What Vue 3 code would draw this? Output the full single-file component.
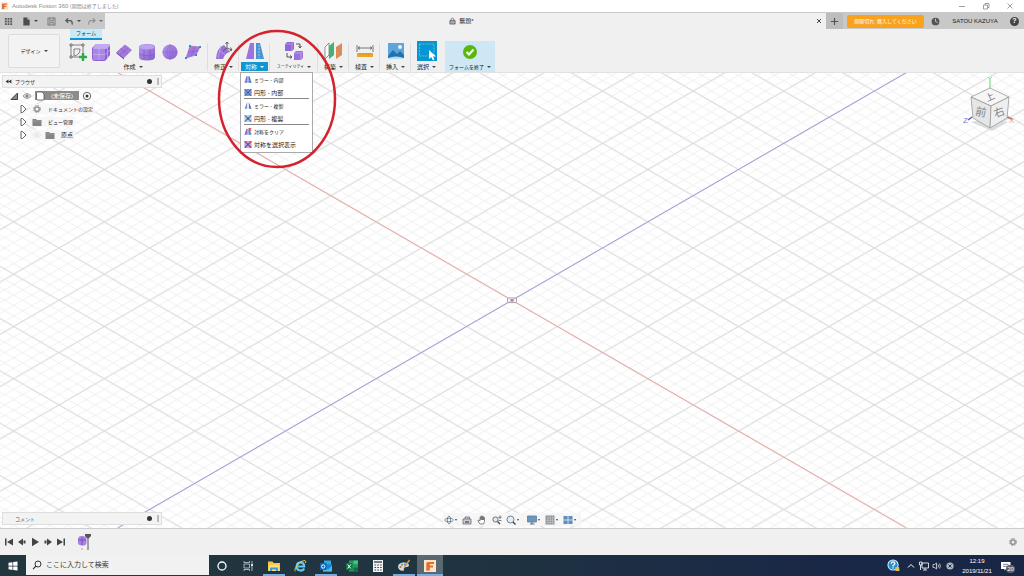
<script setup>
import { ref } from 'vue'

const createTools = [
  { id: 'i-sketch', label: 'スケッチを作成' },
  { id: 'i-box', label: '直方体' },
  { id: 'i-plane', label: '平面' },
  { id: 'i-cylinder', label: '円柱' },
  { id: 'i-sphere', label: '球' },
  { id: 'i-face', label: '面' }
]
const groupsBefore = [{ id: 'i-modify', label: '修正', cls: 'g-std' }]
const groupsAfter = [
  { id: 'i-utility', label: 'ユーティリティ', cls: 'g-util' },
  { id: 'i-construct', label: '構築', cls: 'g-std' },
  { id: 'i-inspect', label: '検査', cls: 'g-std' },
  { id: 'i-insert', label: '挿入', cls: 'g-std' },
  { id: 'i-select', label: '選択', cls: 'g-std g-last' }
]
const menu = [
  { id: 'm-mirror', label: 'ミラー - 内部', kana: true },
  { id: 'm-circ', label: '円形 - 内部', line: true },
  { id: 'm-mirror2', label: 'ミラー - 複製', kana: true },
  { id: 'm-circ2', label: '円形 - 複製', line: true },
  { id: 'm-clear', label: '対称をクリア', kana: true },
  { id: 'm-show', label: '対称を選択表示' }
]
const nav = [
  { id: 'n-orbit', drop: true, label: 'オービット' },
  { id: 'n-look', label: 'ビュー正面' },
  { id: 'n-pan', label: '画面移動' },
  { id: 'n-zoom', label: 'ズーム' },
  { id: 'n-fit', drop: true, label: 'フィット', gap: true },
  { id: 'n-display', drop: true, label: '表示設定' },
  { id: 'n-grid', drop: true, label: 'グリッド' },
  { id: 'n-views', drop: true, label: 'ビューポート' }
]
const play = [
  { id: 'p-first', label: '先頭' },
  { id: 'p-prev', label: '前へ' },
  { id: 'p-play', label: '再生' },
  { id: 'p-next', label: '次へ' },
  { id: 'p-last', label: '末尾' }
]
const apps = [
  { id: 't-cortana', label: 'Cortana' },
  { id: 't-view', label: 'タスクビュー' },
  { id: 't-folder', label: 'エクスプローラー', open: true },
  { id: 't-ie', label: 'Internet Explorer' },
  { id: 't-outlook', label: 'Outlook', open: true },
  { id: 't-excel', label: 'Excel' },
  { id: 't-calc', label: '電卓' },
  { id: 't-paint', label: 'ペイント', open: true },
  { id: 't-fusion', label: 'Fusion 360', open: true, active: true }
]
const query = ref('')
</script>

<template>
  <div class="app">
    <svg class="sheet" aria-hidden="true">
      <defs>
        <linearGradient id="violet" x1="0" y1="0" x2="1" y2="1">
          <stop offset="0" stop-color="#b497ea" /><stop offset="1" stop-color="#8a5fd0" />
        </linearGradient>
        <symbol id="i-sketch" viewBox="0 0 20 20">
          <path d="M3 3H15V15H3Z" fill="none" stroke="#666" stroke-width=".8" />
          <path d="M6 14V7H12V8Q11.500 13 6 14Z" fill="none" stroke="#666" stroke-width=".8" />
          <path d="M2 2h2v2H2zM14 2h2v2h-2zM2 14h2v2H2z" fill="#fff" stroke="#555" stroke-width=".8" />
          <path d="M15 11v8M11 15h8" stroke="#2da84a" stroke-width="2.400" />
        </symbol>
        <symbol id="i-box" viewBox="0 0 20 20">
          <path d="M5 2H17Q19 2 19 4V13L15 18Q14.500 19 13 19H4Q1 19 1 16V6Z" fill="#8d62d3" />
          <path d="M5 2H17Q19 2 19 4L15 7H2Q2 4 5 2Z" fill="#c3aaf0" />
          <path d="M2 8Q2 7 3 7H13Q14 7 14 8V17Q14 18 13 18H3Q2 18 2 17Z" fill="#aa87e4" />
          <path d="M8 7V18M2 12.500H14L19 8M8 7L12 2M16.500 5V16" stroke="#c9b3f2" stroke-width=".7" fill="none" />
        </symbol>
        <symbol id="i-plane" viewBox="0 0 20 20">
          <path d="M11 2.500L18 8L10 16L2.500 10Z" fill="#a178dc" />
          <path d="M2.500 10L10 16L10 17.500L2.500 11.500Z" fill="#6e48ae" />
          <path d="M14.500 5.500L6 13M6.500 6.500L14 12" stroke="#875dc9" stroke-width=".7" />
        </symbol>
        <symbol id="i-cylinder" viewBox="0 0 20 20">
          <path d="M2 5Q2 2 10 2T18 5V15Q18 18.500 10 18.500T2 15Z" fill="url(#violet)" />
          <ellipse cx="10" cy="5" rx="7.500" ry="2.600" fill="#bda2ee" />
          <path d="M7 7.500V18M13 7.500V18M2 12Q10 15.500 18 12" fill="none" stroke="#8054c5" stroke-width=".6" />
        </symbol>
        <symbol id="i-sphere" viewBox="0 0 20 20">
          <circle cx="10" cy="10" r="7.600" fill="url(#violet)" />
          <path d="M10 2.500V17.500M2.500 10H17.500M10 2.500Q4 10 10 17.500M10 2.500Q16 10 10 17.500" fill="none" stroke="#8b62cd" stroke-width=".5" />
        </symbol>
        <symbol id="i-face" viewBox="0 0 20 20">
          <path d="M7 4L17 5L13 13L3 16Z" fill="#a178dc" stroke="#9370cf" stroke-width=".6" />
          <path d="M12 4.500L8 14.500M5 10L15 9" stroke="#8357c7" stroke-width=".6" />
          <path d="M6 3h2v2H6zM16 4h2v2h-2zM12 12h2v2h-2zM2 15h2v2H2z" fill="#3a86d6" />
        </symbol>
        <symbol id="i-modify" viewBox="0 0 20 20">
          <path d="M2 18Q3 6 10 4L16 11Q11 12 9 18Z" fill="#9a70da" />
          <path d="M5 9L11 14M7 5L4 17" stroke="#c3aaee" stroke-width=".7" />
          <path d="M13 7V1M13 7L18 9M13 7L9 10M11.500 3L13 1L14.500 3M16.500 6.500L18 9L15.500 10" fill="none" stroke="#555" stroke-width=".9" />
        </symbol>
        <symbol id="i-sym" viewBox="0 0 20 20">
          <path d="M5 2H9V18H1Z" fill="#9c74db" /><path d="M11 2H15L19 18H11Z" fill="#4b93cf" />
          <path d="M10 1V19" stroke="#e3edf6" stroke-width="1.200" />
          <path d="M14 4V17" stroke="#9cd0ee" stroke-width="1" stroke-dasharray="2 1" />
        </symbol>
        <symbol id="i-utility" viewBox="0 0 20 20">
          <path d="M1 3L3 1H10V8L8 10H1Z" fill="#9268d4" /><path d="M1 3H8V10M8 3L10 1" fill="none" stroke="#c2a9ef" stroke-width=".7" />
          <path d="M10 12L12 10H19V17L17 19H10Z" fill="#9a72da" /><path d="M10 12H17V19M17 12L19 10" fill="none" stroke="#c9b5f2" stroke-width=".7" />
          <path d="M12 3H16V6M14.500 5L16 7L17.500 5M3 12V16H7M6 14.500L8 16L6 17.500" fill="none" stroke="#444" stroke-width=".9" />
        </symbol>
        <symbol id="i-construct" viewBox="0 0 20 20">
          <path d="M1 6L5 2V14L1 18Z" fill="#fff" stroke="#777" stroke-width=".8" />
          <path d="M5 5L10 1V14L5 18Z" fill="#3fb274" /><path d="M12 6L18 2V14L12 18Z" fill="#dd8b56" />
        </symbol>
        <symbol id="i-inspect" viewBox="0 0 20 20">
          <path d="M2 4V11M18 4V11M3 7H17M5 5.500L3 7L5 8.500M15 5.500L17 7L15 8.500" fill="none" stroke="#666" stroke-width=".9" />
          <path d="M2 12H18V16H2Z" fill="#eba52c" /><path d="M5 12v2M8 12v2M11 12v2M14 12v2" stroke="#c28523" stroke-width=".7" />
        </symbol>
        <symbol id="i-insert" viewBox="0 0 20 20">
          <path d="M2 2H18V18H2Z" fill="#5ca6dc" /><path d="M2 15L7 9L11 13L14 10L18 14V18H2Z" fill="#2472ad" />
          <circle cx="14" cy="6" r="2" fill="#e4f3fd" /><path d="M2 17Q10 14 18 17V18H2Z" fill="#b8ddf3" />
        </symbol>
        <symbol id="i-select" viewBox="0 0 20 20">
          <path d="M0 0H20V20H0Z" fill="#0696d7" />
          <path d="M2.500 3H17V15H2.500Z" fill="none" stroke="#7fcb8f" stroke-width=".8" stroke-dasharray="2 1" />
          <path d="M12 9V18L14.200 16L16 19.500L17.500 18.500L16 15.500H19Z" fill="#fff" />
        </symbol>
        <symbol id="i-finish" viewBox="0 0 20 20">
          <circle cx="10" cy="11" r="7" fill="#58b90c" /><path d="M6.500 11L9 13.500L13.500 8.500" fill="none" stroke="#fff" stroke-width="2" />
        </symbol>
        <symbol id="m-mirror" viewBox="0 0 10 10">
          <path d="M3 1H4.500V9H.5Z" fill="#9268d4" /><path d="M5.500 1H7L9.500 9H5.500Z" fill="#3585c5" /><path d="M1 6H9" stroke="#c8b5ee" stroke-width=".6" />
        </symbol>
        <symbol id="m-mirror2" viewBox="0 0 10 10">
          <path d="M3.800 1V9H.8Z" fill="#7b8dce" /><path d="M6.200 1V9H9.500Z" fill="#3585c5" /><path d="M5 1V9" stroke="#aaa" stroke-width=".5" />
        </symbol>
        <symbol id="m-circ" viewBox="0 0 10 10">
          <path d="M.5 .5H9.500V9.500H.5Z" fill="#8aa8d7" /><path d="M1 1L9 9M9 1L1 9" stroke="#3167a7" stroke-width="1.300" /><path d="M4 .5H6L5 3ZM4 9.500H6L5 7ZM.5 4V6L3 5ZM9.500 4V6L7 5Z" fill="#8a62c9" />
        </symbol>
        <symbol id="m-circ2" viewBox="0 0 10 10">
          <path d="M.5 .5H9.500V9.500H.5Z" fill="#bccde3" /><path d="M1 1L9 9M9 1L1 9" stroke="#4a80b5" stroke-width="1.500" /><circle cx="5" cy="5" r="1.500" fill="#396a9e" />
        </symbol>
        <symbol id="m-clear" viewBox="0 0 10 10">
          <path d="M3 1.500H4.500V9H.5Z" fill="#9268d4" /><path d="M5.500 1.500H7L9.500 9H5.500Z" fill="#4d8fca" /><path d="M6 .8L9 3.800M9 .8L6 3.800" stroke="#e04343" stroke-width="1.400" />
        </symbol>
        <symbol id="m-show" viewBox="0 0 10 10">
          <path d="M.5 .5H9.500V9.500H.5Z" fill="#b8a6d8" /><path d="M1 1L9 9M9 1L1 9" stroke="#6e48ae" stroke-width="1.500" /><path d="M1 1h2v2H1zM7 7h2v2H7zM7 1h2v2H7z" fill="#d94a5f" />
        </symbol>
        <symbol id="gear" viewBox="0 0 12 12">
          <circle cx="6" cy="6" r="4.100" fill="none" stroke="#888" stroke-width="1.200" stroke-dasharray="1.900 1.320" /><circle cx="6" cy="6" r="2.700" fill="none" stroke="#888" stroke-width="1.500" />
        </symbol>
        <symbol id="folder" viewBox="0 0 10 10"><path d="M.5 2H4L5 3H9.500V9H.5Z" fill="#858585" /><path d="M.5 4H9.500" stroke="#aaa" stroke-width=".6" /></symbol>
        <symbol id="eye" viewBox="0 0 10 10"><path d="M.8 5Q5 0 9.200 5Q5 10 .8 5Z" fill="#ddd" stroke="#999" stroke-width=".9" /><circle cx="5" cy="5" r="1.600" fill="#888" /></symbol>
        <symbol id="expand" viewBox="0 0 10 10"><path d="M3 1.500H4.500L8 5L4.500 8.500H3Z" fill="#fff" stroke="#555" stroke-width=".9" /></symbol>
        <symbol id="n-orbit" viewBox="0 0 10 10"><ellipse cx="5" cy="5" rx="4.300" ry="1.800" fill="none" stroke="#678" stroke-width=".8" /><ellipse cx="5" cy="5" rx="1.600" ry="4" fill="none" stroke="#678" stroke-width=".8" /></symbol>
        <symbol id="n-look" viewBox="0 0 10 10"><path d="M1 4H9V9H1ZM3 4V2H7.500V4" fill="#ccc" stroke="#778" stroke-width=".9" /><path d="M3 6h4v2H3z" fill="#778" /></symbol>
        <symbol id="n-pan" viewBox="0 0 10 10"><path d="M3 9L.8 5.500L2 5L3 6V2.200H4V5V1H5.200V5V1.500H6.300V5V2.500H7.500V6.500L6.500 9Z" fill="#fff" stroke="#555" stroke-width=".7" /></symbol>
        <symbol id="n-zoom" viewBox="0 0 10 10"><circle cx="3.500" cy="4.500" r="2.600" fill="#dfe9ef" stroke="#678" /><path d="M5.500 6.500L8 9" stroke="#444" stroke-width="1.300" /><path d="M8 .5V4M6.300 2.200H9.700M6.500 5.500h3" stroke="#555" stroke-width=".7" /></symbol>
        <symbol id="n-fit" viewBox="0 0 10 10"><circle cx="4.500" cy="4.500" r="3.500" fill="#e4edf2" stroke="#678" stroke-width=".9" /><path d="M7 7L9.500 9.500" stroke="#444" stroke-width="1.400" /></symbol>
        <symbol id="n-display" viewBox="0 0 10 10"><path d="M.5 1H9.500V7H.5Z" fill="#6a96c2" stroke="#667b90" stroke-width=".8" /><path d="M3 9H7.500M5 7V9" stroke="#667" /></symbol>
        <symbol id="n-grid" viewBox="0 0 10 10"><path d="M.5 .5H9.500V9.500H.5Z" fill="#8e9396" /><path d="M.5 3H9.500M.5 5.300H9.500M.5 7.600H9.500M3 .5V9.500M5.300 .5V9.500M7.600 .5V9.500" stroke="#d0d4d6" stroke-width=".5" /></symbol>
        <symbol id="n-views" viewBox="0 0 10 10"><path d="M.5 1H9.500V9H.5Z" fill="#5f8dbc" /><path d="M5 1V9M.5 5H9.500" stroke="#e8f0f8" stroke-width=".8" /></symbol>
        <symbol id="p-first" viewBox="0 0 10 10"><path d="M1 1.500H2.500V8.500H1ZM9 1.500V8.500L3 5Z" fill="#444" /></symbol>
        <symbol id="p-prev" viewBox="0 0 10 10"><path d="M6 1.500V8.500L1 5ZM6.500 3.500H8.500V6.500H6.500Z" fill="#444" /></symbol>
        <symbol id="p-play" viewBox="0 0 10 10"><path d="M2 .8L9 5L2 9.200Z" fill="#444" /></symbol>
        <symbol id="p-next" viewBox="0 0 10 10"><path d="M4 1.500V8.500L9 5ZM1.500 3.500H3.500V6.500H1.500Z" fill="#444" /></symbol>
        <symbol id="p-last" viewBox="0 0 10 10"><path d="M9 1.500H7.500V8.500H9ZM1 1.500V8.500L7 5Z" fill="#444" /></symbol>
        <symbol id="t-cortana" viewBox="0 0 14 14"><circle cx="7" cy="7" r="4" fill="none" stroke="#fff" stroke-width="1.300" /></symbol>
        <symbol id="t-view" viewBox="0 0 14 14"><path d="M3 5H8.500V9H3ZM3 2V3.500H8.500V2M3 12V10.500H8.500V12M11 2V12" fill="none" stroke="#c5cfd3" stroke-width=".8" /><path d="M10 5h2v2h-2z" fill="#ddd" /></symbol>
        <symbol id="t-folder" viewBox="0 0 14 14"><path d="M1 2.500H5.500L6.500 4H13V12H1Z" fill="#f5c74c" /><path d="M2 6H12V12H2Z" fill="#ffdf81" /><path d="M3 12V8.500H11V12H9V10.500H5V12Z" fill="#3b9bd5" /></symbol>
        <symbol id="t-ie" viewBox="0 0 14 14"><path d="M11.200 9.500Q10 12 7.200 11.500Q3.500 11 3.700 7.200Q4 3.500 7.500 3.300Q11 3.500 11.200 7.500H5" fill="none" stroke="#62c8f3" stroke-width="2.200" /><path d="M2.500 12Q.5 12 4 6.500Q8 1 12 1.500Q13.500 2 12.300 4" fill="none" stroke="#f3cf4b" stroke-width="1" /></symbol>
        <symbol id="t-outlook" viewBox="0 0 14 14"><path d="M5 1.500H12V7H5Z" fill="#35a6e6" /><path d="M4 6L13 5V12.500H4Z" fill="#1783d1" /><path d="M4 7L9 10.500L13 7V12.500H4Z" fill="#50b9ed" /><path d="M1 4H7.500V11H1Z" fill="#0b63b5" /><circle cx="4.200" cy="7.500" r="1.700" fill="none" stroke="#fff" stroke-width="1" /></symbol>
        <symbol id="t-excel" viewBox="0 0 14 14"><path d="M4 1.500H13V12.500H4Z" fill="#249a5c" /><path d="M8.500 1.500H13V5H8.500Z" fill="#3bc584" /><path d="M8.500 8.500H13V12.500H8.500Z" fill="#136c3e" /><path d="M1 4H7.500V11H1Z" fill="#107743" /><path d="M2.700 5.500L5.800 9.500M5.800 5.500L2.700 9.500" stroke="#fff" stroke-width="1" /></symbol>
        <symbol id="t-calc" viewBox="0 0 14 14"><path d="M2 1H12V13H2Z" fill="#f2f2f2" /><path d="M3 3H11" stroke="#344b54" stroke-width="1.400" /><path d="M3.500 6H10.800M3.500 8.500H10.800M3.500 11H10.800" stroke="#344b54" stroke-width="1.200" stroke-dasharray="1.600 1.200" /></symbol>
        <symbol id="t-paint" viewBox="0 0 14 14"><path d="M1 8Q1 4 6 3.500T12 6Q12 8 9 8T7 11.500Q2 12.500 1 8Z" fill="#d5dde1" /><circle cx="3.500" cy="8" r="1" fill="#d75543" /><circle cx="5" cy="5.700" r="1" fill="#4c9c58" /><circle cx="8" cy="5.500" r="1" fill="#3878bd" /><path d="M12.500 1L7 9" stroke="#d59b4f" stroke-width="1.400" /></symbol>
        <symbol id="t-fusion" viewBox="0 0 14 14"><path d="M1 1H13V13H1Z" fill="#fbe4cf" /><path d="M4.500 3H11V5H6.800V6.500H10V8.500H6.800V11.500H4.500Z" fill="#ec6c1c" /><path d="M4.500 3L3.500 4V12L4.500 11.500Z" fill="#a84710" /></symbol>
      </defs>
    </svg>

    <header class="titlebar">
      <svg class="logo" viewBox="0 0 14 14"><use href="#t-fusion" /></svg>
      <span class="title">Autodesk Fusion 360 <small>(期間は終了しました)</small></span>
      <div class="wincontrols">
        <button aria-label="最小化"><svg viewBox="0 0 8 8"><path d="M1 4.500H7" /></svg></button>
        <button aria-label="元に戻す"><svg viewBox="0 0 8 8"><path d="M1.500 3H5.500V7H1.500ZM3 3V1.500H7V5.500H5.500" /></svg></button>
        <button aria-label="閉じる"><svg viewBox="0 0 8 8"><path d="M1.500 1.500L6.500 6.500M6.500 1.500L1.500 6.500" /></svg></button>
      </div>
    </header>

    <div class="tabbar">
      <div class="quick">
        <button aria-label="データパネル"><svg viewBox="0 0 10 10"><path d="M1 1h2v2H1zM4 1h2v2H4zM7 1h2v2H7zM1 4h2v2H1zM4 4h2v2H4zM7 4h2v2H7zM1 7h2v2H1zM4 7h2v2H4zM7 7h2v2H7z" fill="#555" /></svg></button>
        <button aria-label="ファイル" class="q-drop"><svg viewBox="0 0 10 10"><path d="M1.500 .5H6L8.500 3V9.500H1.500Z" fill="#4c4c4c" /><path d="M6 .5V3H8.500" fill="#bbb" /></svg><i></i></button>
        <button aria-label="保存"><svg viewBox="0 0 10 10"><path d="M1 1H9V9H1Z" fill="#b9b9b9" stroke="#777" stroke-width=".9" /><path d="M3 1V4H7V1M3 9V6H7V9" fill="none" stroke="#777" stroke-width=".8" /></svg></button>
        <button aria-label="元に戻す" class="q-drop"><svg viewBox="0 0 10 10"><path d="M3.500 1.500L1 4L3.500 6.500M1 4H6Q8.500 4.500 8 8.500" fill="none" stroke="#555" stroke-width="1.400" /></svg><i></i></button>
        <button aria-label="やり直し" class="q-drop faded"><svg viewBox="0 0 10 10"><path d="M6.500 1.500L9 4L6.500 6.500M9 4H4Q1.500 4.500 2 8.500" fill="none" stroke="#777" stroke-width="1.200" /></svg><i></i></button>
      </div>
      <div class="doc">
        <svg class="lock" viewBox="0 0 8 8"><path d="M1 3.500H7V7.500H1Z" fill="#aaa" stroke="#555" stroke-width=".8" /><path d="M2.300 3.500V2Q4 -.5 5.700 2V3.500" fill="none" stroke="#555" stroke-width=".9" /></svg>
        <span>無題*</span>
        <button class="doc-close" aria-label="タブを閉じる"><svg viewBox="0 0 8 8"><path d="M2 2L6 6M6 2L2 6" stroke="#444" stroke-width="1" /></svg></button>
      </div>
      <div class="account">
        <button class="plus" aria-label="新規"><svg viewBox="0 0 10 10"><path d="M5 1V9M1 5H9" stroke="#555" stroke-width="1.300" /></svg></button>
        <button class="buy">期限切れ: 購入してください</button>
        <svg class="clockico" viewBox="0 0 10 10"><circle cx="5" cy="5" r="4.300" fill="#555" /><path d="M5 2V5L7.500 6" stroke="#ccc" fill="none" /></svg>
        <span class="user">SATOU KAZUYA</span>
        <button class="help" aria-label="ヘルプ">?</button>
      </div>
    </div>

    <section class="ribbon">
      <button class="workspace"><span class="kana">デザイン</span><i></i></button>
      <div class="g create">
        <a class="tab kana" href="#form">フォーム</a>
        <div class="tools">
          <button v-for="t in createTools" :key="t.id" :aria-label="t.label"><svg viewBox="0 0 20 20"><use :href="'#' + t.id" /></svg></button>
        </div>
        <button class="lbl">作成<i></i></button>
      </div>
      <div v-for="g in groupsBefore" :key="g.id" class="g" :class="g.cls">
        <svg class="big" viewBox="0 0 20 20"><use :href="'#' + g.id" /></svg>
        <button class="lbl">{{ g.label }}<i></i></button>
      </div>
      <div class="g g-std sym">
        <svg class="big" viewBox="0 0 20 20"><use href="#i-sym" /></svg>
        <button class="lbl on">対称<i></i></button>
        <ul class="menu">
          <li v-for="m in menu" :key="m.id" :class="{ line: m.line, kana: m.kana }">
            <button><svg viewBox="0 0 10 10"><use :href="'#' + m.id" /></svg>{{ m.label }}</button>
          </li>
        </ul>
        <svg class="ring" viewBox="0 0 120 140"><ellipse cx="60" cy="70" rx="58" ry="68" /></svg>
      </div>
      <div v-for="g in groupsAfter" :key="g.id" class="g" :class="g.cls">
        <svg class="big" viewBox="0 0 20 20"><use :href="'#' + g.id" /></svg>
        <button class="lbl">{{ g.label }}<i></i></button>
      </div>
      <div class="g finish">
        <svg class="big" viewBox="0 0 20 20"><use href="#i-finish" /></svg>
        <button class="lbl kana">フォームを終了<i></i></button>
      </div>
    </section>

    <main class="canvas">
      <svg class="grid" viewBox="0 0 1024 455" preserveAspectRatio="xMidYMid slice">
        <defs>
          <pattern id="minor" x="512" y="227.300" width="18.120" height="10.460" patternUnits="userSpaceOnUse">
            <path d="M0 0L18.120 10.460M18.120 0L0 10.460" stroke="#e9e9e9" stroke-width=".7" />
          </pattern>
          <pattern id="major" x="512" y="227.300" width="90.600" height="52.300" patternUnits="userSpaceOnUse">
            <path d="M0 0L90.600 52.300M90.600 0L0 52.300" stroke="#d9d9d9" stroke-width="1" />
          </pattern>
        </defs>
        <rect width="1024" height="455" fill="url(#minor)" />
        <rect width="1024" height="455" fill="url(#major)" />
        <path d="M118 -.200L906 454.700" stroke="#eda6a2" stroke-width="1" />
        <path d="M118 454.700L906 -.200" stroke="#9d9de0" stroke-width="1" />
        <rect x="507.500" y="225" width="9" height="4.600" rx="1" fill="#fff" fill-opacity=".5" stroke="#a8989f" stroke-width=".9" />
        <circle cx="512" cy="227.300" r="1.500" fill="#9d8aa8" />
      </svg>

      <aside class="browser">
        <div class="panel">
          <svg class="rew" viewBox="0 0 8 6"><path d="M4 .5V5.500L.5 3ZM7.500 .5V5.500L4 3Z" fill="#333" /></svg>
          <span class="kana">ブラウザ</span><b></b><em></em>
        </div>
        <ul class="tree">
          <li class="root">
            <svg viewBox="0 0 10 10"><path d="M8.500 2V8.500H2Z" fill="#888" stroke="#333" stroke-width=".9" /></svg>
            <svg viewBox="0 0 10 10"><use href="#eye" /></svg>
            <span class="chip"><svg viewBox="0 0 10 10"><path d="M1.500 2Q1.500 1 2.500 1H7L9 3V8Q9 9 8 9H2.500Q1.500 9 1.500 8Z" fill="#fff" stroke="#555" stroke-width=".8" /></svg><strong>(未保存)</strong></span>
            <svg viewBox="0 0 10 10"><circle cx="5" cy="5" r="3.700" fill="#fff" stroke="#555" stroke-width=".9" /><circle cx="5" cy="5" r="1.500" fill="#333" /></svg>
          </li>
          <li><svg viewBox="0 0 10 10"><use href="#expand" /></svg><span class="node"><svg viewBox="0 0 12 12"><use href="#gear" /></svg><span class="kana">ドキュメントの設定</span></span></li>
          <li><svg viewBox="0 0 10 10"><use href="#expand" /></svg><span class="node"><svg viewBox="0 0 10 10"><use href="#folder" /></svg><span class="kana">ビュー管理</span></span></li>
          <li><svg viewBox="0 0 10 10"><use href="#expand" /></svg><span class="node"><svg class="ghost" viewBox="0 0 10 10"><use href="#eye" /></svg><svg viewBox="0 0 10 10"><use href="#folder" /></svg><span>原点</span></span></li>
        </ul>
      </aside>

      <svg class="cube" viewBox="0 0 56 62">
        <path d="M28 5V16" stroke="#7fdc86" stroke-width="1.200" /><path d="M26 4L28 6L30 4" fill="none" stroke="#8fe396" />
        <path d="M10 44L6 47" stroke="#5b5bb8" stroke-width="1.500" /><path d="M45 44L50 46" stroke="#c76464" stroke-width="1.500" />
        <path d="M9 49Q28 43 46 49L30 58Z" fill="#dcdcdc" />
        <path d="M28 15L47 24L29 33L9 24Z" fill="#f6f6f6" stroke="#999" stroke-width=".8" />
        <path d="M9 24L29 33L28 55L11 45Z" fill="#e5e6e7" stroke="#999" stroke-width=".8" />
        <path d="M47 24L29 33L28 55L45 45Z" fill="#eeeff0" stroke="#999" stroke-width=".8" />
        <text x="28" y="27" font-size="9" fill="#777" text-anchor="middle" transform="rotate(-25 28 24)">上</text>
        <text x="19" y="43" font-size="11" fill="#888" text-anchor="middle" transform="rotate(12 19 39)">前</text>
        <text x="37" y="43" font-size="11" fill="#888" text-anchor="middle" transform="rotate(-20 37 39)">右</text>
        <text x="1" y="50" font-size="8" fill="#7d7de0">Z</text>
        <text x="47" y="50" font-size="8" fill="#ee8a86">X</text>
      </svg>

      <div class="panel comment"><span class="kana">コメント</span><b></b><em></em></div>

      <nav class="navbar">
        <button v-for="n in nav" :key="n.id" :aria-label="n.label" :class="{ gap: n.gap }"><svg viewBox="0 0 10 10"><use :href="'#' + n.id" /></svg><i v-if="n.drop"></i></button>
      </nav>
    </main>

    <section class="timeline">
      <button v-for="p in play" :key="p.id" :aria-label="p.label"><svg viewBox="0 0 10 10"><use :href="'#' + p.id" /></svg></button>
      <svg class="feature" viewBox="0 0 16 20">
        <path d="M1 7Q1 4 5 4T9.500 6V11Q9 14 5 13.500T1 11Z" fill="#a583de" /><path d="M1 8H9M5 5V13" stroke="#7443b9" stroke-width=".8" />
        <path d="M8 2H14V4L11.500 6.500V18H10.500V6.500L8 4Z" fill="#555" /><path d="M5 16V18" stroke="#b19ae0" />
      </svg>
      <button class="settings" aria-label="設定"><svg viewBox="0 0 12 12"><use href="#gear" /></svg></button>
    </section>

    <footer class="taskbar">
      <button class="start" aria-label="スタート"><svg viewBox="0 0 10 10"><path d="M.5 1.800L4.500 1.200V4.700H.5ZM5.200 1.100L9.500 .5V4.700H5.200ZM.5 5.400H4.500V8.900L.5 8.300ZM5.200 5.400H9.500V9.600L5.200 9Z" fill="#fff" /></svg></button>
      <label class="search">
        <svg viewBox="0 0 10 10"><circle cx="6" cy="4" r="3" fill="none" stroke="#333" stroke-width="1" /><path d="M4 6L1 9.200" stroke="#333" stroke-width="1.100" /></svg>
        <input v-model="query" type="text" placeholder="ここに入力して検索" aria-label="検索" />
      </label>
      <button v-for="a in apps" :key="a.id" class="appbtn" :class="{ open: a.open, active: a.active }" :aria-label="a.label"><svg viewBox="0 0 14 14"><use :href="'#' + a.id" /></svg></button>
      <div class="tray">
        <svg class="helpico" viewBox="0 0 14 14"><circle cx="6.500" cy="6.500" r="6" fill="#e4f4fc" /><circle cx="6.500" cy="6.500" r="5" fill="#278fcb" /><path d="M4.500 5Q4.700 3 6.500 3T8.500 5Q8.300 6.300 6.500 7V8M6.500 9V10.300" fill="none" stroke="#fff" stroke-width="1.300" /><path d="M9 9L13 8.500L13.500 13H9Z" fill="#e5c14d" /></svg>
        <svg viewBox="0 0 10 10"><path d="M2 6.500L5 3.500L8 6.500" fill="none" stroke="#fff" /></svg>
        <svg viewBox="0 0 10 10"><path d="M3 2H9.500V7H3ZM6 7V9M4 9H8M.5 1H3V4H.5ZM1.500 4V9" fill="none" stroke="#fff" stroke-width=".8" /></svg>
        <svg viewBox="0 0 10 10"><path d="M1 3.500H2.500L4.500 2V8L2.500 6.500H1ZM6 3.500Q7 5 6 6.500M7.500 2.500Q9.200 5 7.500 7.500" fill="none" stroke="#ddd" stroke-width=".8" /></svg>
        <svg viewBox="0 0 10 10"><circle cx="5" cy="5" r="3.600" fill="#aeb5bd" /><path d="M3.500 3.500L6.500 6.500M6.500 3.500L3.500 6.500" stroke="#24314d" stroke-width="1" /></svg>
        <time>12:19<br />2019/11/21</time>
        <span class="notice"><svg viewBox="0 0 10 10"><path d="M0 1H9.500V8H5L3.500 9.800V8H0Z" fill="#fff" /><path d="M2 3.300H7.500M2 5.300H7.500" stroke="#47526c" stroke-width=".7" /></svg><b>20</b></span>
      </div>
    </footer>
  </div>
</template>

<style>
html, body { margin: 0; background: #fff; }
</style>

<style scoped>
.app { display: flex; flex-direction: column; min-height: 100vh; overflow: hidden; font: 6px/8px "Liberation Sans", "Noto Sans CJK JP", sans-serif; color: #222; }
.app * { box-sizing: border-box; }
.sheet { position: absolute; width: 0; height: 0; }
button { border: 0; padding: 0; margin: 0; background: none; font: inherit; color: inherit; display: flex; align-items: center; justify-content: center; white-space: nowrap; }
svg { display: block; flex: none; }
ul { list-style: none; margin: 0; padding: 0; }
i { flex: none; width: 0; height: 0; border: 2px solid transparent; border-top: 2px solid #444; border-bottom: 0; margin-left: 3px; }
.kana { font-size: 5px; }

.titlebar { display: flex; align-items: center; height: 13px; background: #fff; border-bottom: 1px solid #c8c8c8; color: #8c8c8c; }
.logo { width: 9px; height: 10px; margin: 0 3px 0 0; }
.title small { font-size: 5px; }
.wincontrols { margin-left: auto; display: flex; gap: 16px; padding-right: 10px; }
.wincontrols svg { width: 8px; height: 8px; fill: none; stroke: #888; stroke-width: .8; }

.tabbar { display: flex; height: 16px; background: #f0f0f0; }
.quick { width: 105px; display: flex; align-items: center; gap: 9px; padding-left: 4px; background: #c8c8c8; }
.quick svg { width: 9px; height: 9px; }
.quick .faded { margin-left: -3px; opacity: .7; }
.doc { flex: 1; display: flex; align-items: center; justify-content: center; gap: 3px; padding-left: 6px; }
.lock { width: 7px; height: 8px; margin-left: auto; }
.doc-close { margin-left: auto; padding-right: 3px; }
.doc-close svg { width: 8px; height: 8px; }
.account { width: 198px; display: flex; align-items: center; background: #c8c8c8; }
.plus { width: 17px; height: 16px; background: #bdbdbd; }
.plus svg { width: 9px; height: 9px; }
.buy { width: 77px; height: 13px; margin-left: 4px; border-radius: 2px; background: #faa21b; color: #fff; font-size: 5px; }
.clockico { width: 9px; height: 9px; margin-left: 7px; }
.user { margin: 0 auto; }
.help { width: 9px; height: 9px; margin-right: 5px; border-radius: 50%; background: #444; color: #fff; font-size: 7px; font-weight: bold; }

.ribbon { display: flex; height: 44px; background: #f0f0f0; border-bottom: 1px solid #e2e2e2; }
.workspace { width: 52px; height: 34px; margin: 5px 6px 0 8px; border: 1px solid #dcdcdc; border-radius: 2px; background: #f3f3f3; }
.g { position: relative; display: flex; flex-direction: column; align-items: center; justify-content: flex-end; }
.g:not(.finish):not(.g-last)::after { content: ""; position: absolute; right: 0; top: 14px; width: 1px; height: 28px; background: #dedede; }
.create { width: 142px; justify-content: flex-start; }
.create .lbl { padding-right: 8px; }
.tab { align-self: flex-start; width: 32px; height: 11px; margin-left: 4px; border-bottom: 2px solid #1793cd; background: #c9e9f6; color: #134; text-align: center; text-decoration: none; line-height: 9px; }
.tools { align-self: stretch; display: flex; gap: 3px; padding: 2px 6px 0 2px; justify-content: space-between; }
.tools svg { width: 20px; height: 20px; }
.g-std { width: 31px; }
.g-util { width: 48px; }
.big { width: 20px; height: 20px; }
.lbl { width: 100%; height: 9px; margin: 1px 0; }
.lbl.on { width: 27px; background: #0e97d2; color: #fff; }
.lbl.on i { border-top-color: #fff; }
.g-util .lbl { font-size: 4px; color: #000; }
.finish { width: 50px; margin: 12px 0 0 3px; background: #cde7f4; }

.menu { position: absolute; z-index: 3; top: 43px; left: 1px; width: 73px; padding: 0 3px 1px; background: #fff; border: 1px solid #aaa; }
.menu li { height: 13px; }
.menu .line { border-bottom: 1px solid #888; }
.menu button { height: 13px; gap: 2px; }
.menu svg { width: 8px; height: 9px; }
.ring { position: absolute; z-index: 4; top: 0; left: -22px; width: 120px; height: 140px; pointer-events: none; }
.ring ellipse { fill: none; stroke: #d3232e; stroke-width: 2.500; }

.canvas { position: relative; flex: 1; min-height: 200px; background: #fff; overflow: hidden; }
.grid { position: absolute; inset: 0; width: 100%; height: 100%; }
.browser { position: absolute; top: 2px; left: 2px; width: 160px; }
.panel { display: flex; align-items: center; height: 13px; padding: 0 2px; border: 1px solid #dedede; background: #f3f3f3; }
.panel b { width: 5px; height: 5px; margin-left: auto; border-radius: 50%; background: #333; }
.panel em { width: 2px; height: 7px; margin-left: 4px; background: #bbb; }
.panel b { margin-right: 1px; }
.rew { width: 7px; height: 5px; margin-right: 3px; }
.tree { padding: 1px 0 0 16px; }
.tree li { display: flex; align-items: center; height: 13px; }
.tree svg { width: 10px; height: 10px; }
.tree .root { margin-left: -9px; gap: 3px; }
.root .chip { display: flex; align-items: center; width: 44px; height: 9px; background: #8b8b8b; color: #fff; }
.root .chip strong { flex: 1; text-align: center; font-weight: normal; }
.node { display: flex; align-items: center; gap: 6px; margin-left: 2px; padding: 0 2px; background: #f7f7f7; }
.node .ghost { opacity: .15; margin-right: -3px; }
.cube { position: absolute; top: 0; right: 6px; width: 56px; height: 62px; }
.comment { position: absolute; left: 2px; bottom: 3px; width: 160px; padding-left: 12px; color: #555; }
.navbar { position: absolute; left: 50%; bottom: 2px; width: 138px; height: 13px; margin-left: -69px; padding: 0 5px 0 1px; display: flex; align-items: center; justify-content: space-between; background: #f6f6f6; }
.navbar svg { width: 10px; height: 10px; }
.navbar i { border-width: 1px; border-top-width: 2px; margin-left: 1px; }
.navbar .gap { margin-right: 3px; }

.timeline { display: flex; align-items: center; height: 27px; padding: 0 6px 0 4px; gap: 3px; background: #f0f0f0; border-top: 1px solid #ccc; }
.timeline button svg { width: 10px; height: 10px; }
.timeline .feature { width: 16px; height: 20px; margin-left: 8px; }
.timeline .settings { margin-left: auto; }

.taskbar { display: flex; height: 21px; background: linear-gradient(90deg, #22363f 0%, #20353f 40%, #1a2847 80%, #192644 100%); }
.start { width: 26px; }
.start svg { width: 10px; height: 10px; }
.search { display: flex; align-items: center; width: 183px; height: 20px; padding-left: 6px; gap: 4px; background: #f1f1f1; }
.search svg { width: 10px; height: 10px; }
.search input { flex: 1; min-width: 0; border: 0; padding: 0; outline: 0; background: none; font: 7px/12px "Liberation Sans", "Noto Sans CJK JP", sans-serif; color: #333; }
.search input::placeholder { color: #333; opacity: 1; }
.appbtn { position: relative; width: 26px; }
.appbtn svg { width: 14px; height: 14px; }
.appbtn.open::after { content: ""; position: absolute; left: 2px; right: 2px; bottom: 0; height: 2px; background: #75aede; }
.appbtn.active { background-color: #5a686f; }
.appbtn.active::after { left: 0; right: 0; }
.tray { margin-left: auto; display: flex; align-items: center; gap: 3px; padding-right: 9px; color: #fff; }
.tray svg { width: 10px; height: 10px; }
.tray .helpico { width: 13px; height: 13px; margin-right: 3px; }
.tray time { width: 34px; margin: 0 4px 0 2px; text-align: center; line-height: 10px; }
.notice { position: relative; width: 14px; }
.notice b { position: absolute; left: 5px; top: 4px; width: 9px; height: 8px; border-radius: 4px; background: #59606b; font-weight: normal; text-align: center; }
</style>
